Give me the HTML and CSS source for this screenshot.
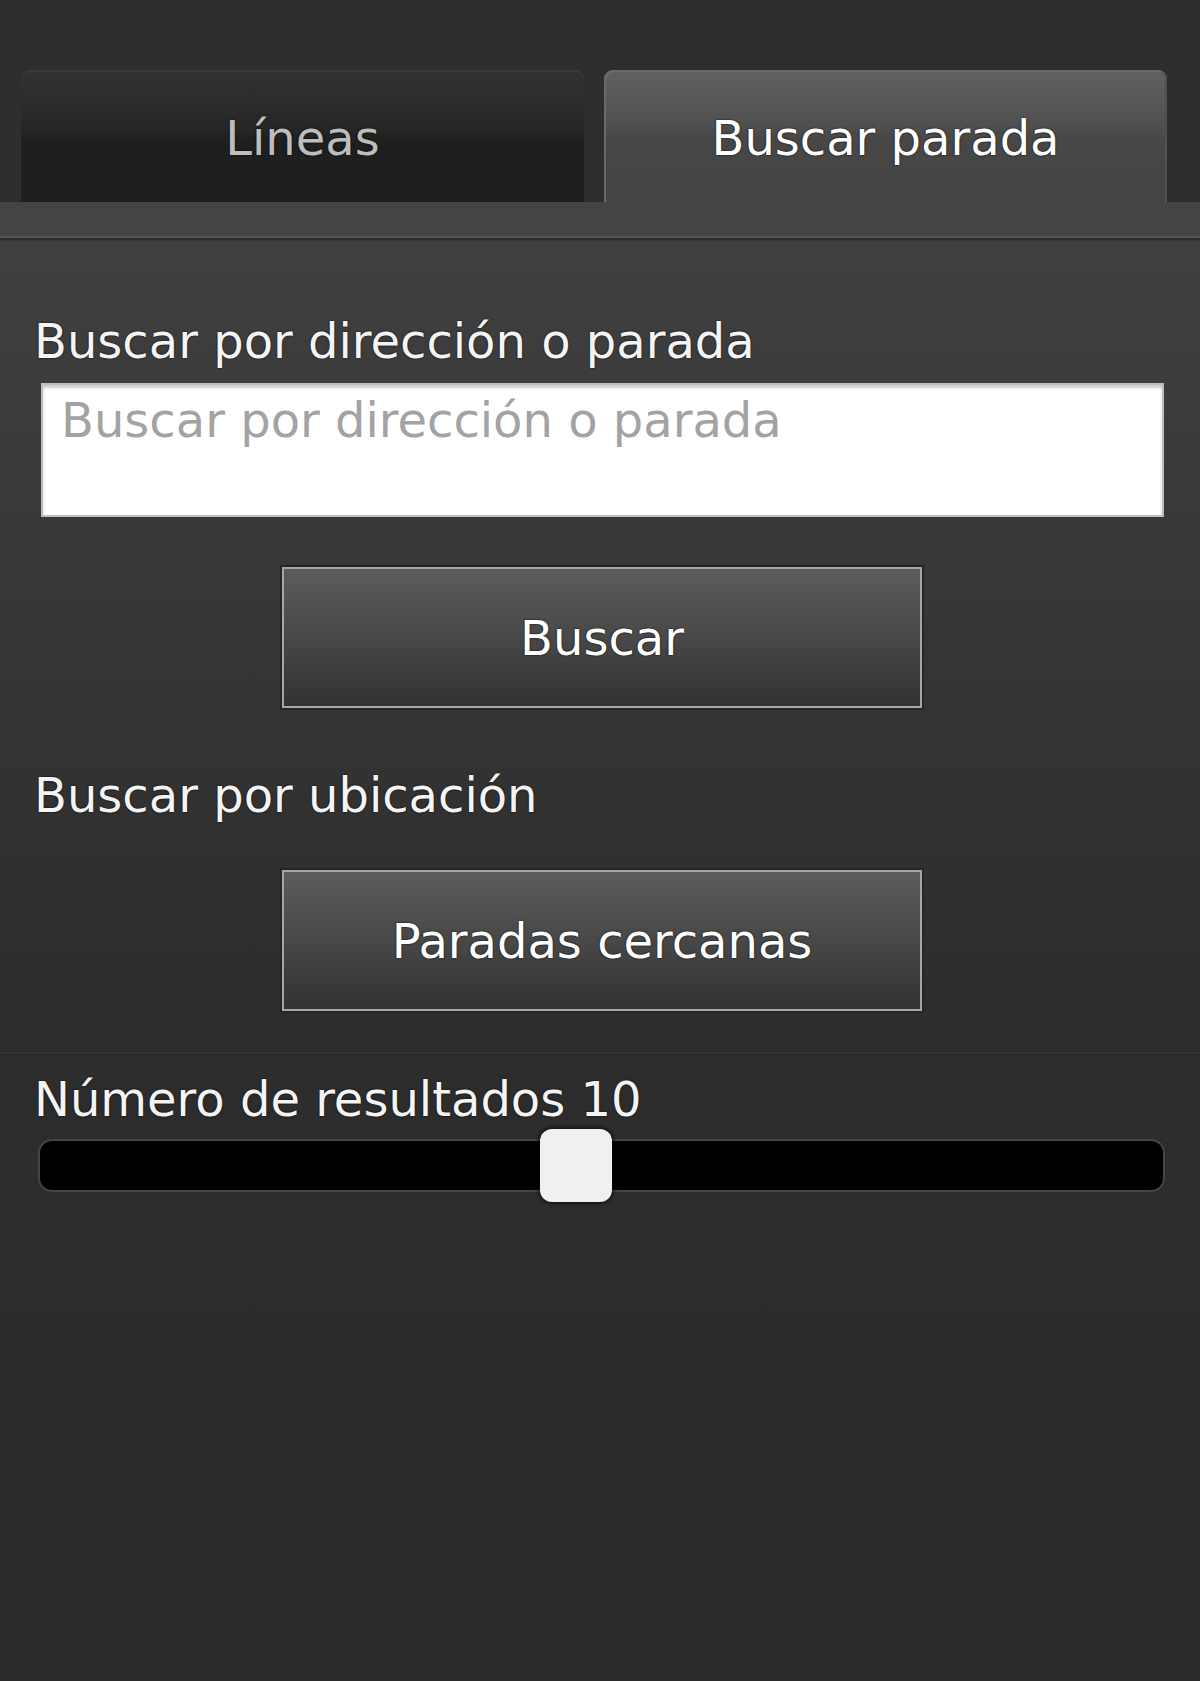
FILE: index.html
```html
<!DOCTYPE html>
<html lang="es">
<head>
    <meta charset="UTF-8">
    <title>Buscar parada</title>
    <link rel="stylesheet" href="styles.css">
</head>
<body>
<div class="screen">
    <!--pestañas-->
    <div class="tabs">
        <div class="tab">Líneas</div>
        <div class="tab active">Buscar parada</div>
    </div>
    <div class="tab-strip"></div>
    <!--contenido de la pestaña-->
    <div class="panel">
        <div class="label">Buscar por dirección o parada</div>
        <input class="search" type="text" placeholder="Buscar por dirección o parada">
        <div class="btn-row"><button class="btn">Buscar</button></div>

        <div class="label label-loc">Buscar por ubicación</div>
        <div class="btn-row btn-row-loc"><button class="btn">Paradas cercanas</button></div>

        <div class="sep"></div>

        <div class="label label-num">Número de resultados 10</div>
        <div class="slider">
            <div class="track"></div>
            <div class="thumb"></div>
        </div>
    </div>
</div>
</body>
</html>
```

FILE: styles.css
```css
* {
    margin: 0;
    padding: 0;
    box-sizing: border-box;
}

body {
    background-color: #2d2d2d;
    font-family: "DejaVu Sans", "Open Sans", sans-serif;
    color: #f4f4f4;
}

.screen {
    width: 1200px;
    min-height: 1681px;
    background: linear-gradient(#2e2e2e 0, #2e2e2e 240px, #404040 241px, #343434 700px, #2d2d2d 1000px, #2b2b2b 1681px);
}

/*pestañas*/
.tabs {
    display: flex;
    gap: 20px;
    padding: 70px 33px 0 21px;
}

.tab {
    width: 563px;
    height: 132px;
    padding-top: 8px;
    border-radius: 9px 9px 0 0;
    background: linear-gradient(#333 0, #262626 60px, #1f1f1f 70px, #1e1e1e 100%);
    box-shadow: inset 0 2px 0 #3a3a3a;
    color: #bdbdbd;
    font-size: 48px;
    line-height: 120px;
    text-align: center;
    text-shadow: 0 0 2px #000;
}

.tab.active {
    background: linear-gradient(#616161 0, #525252 50px, #474747 70px, #444 100%);
    box-shadow: inset 2px 2px 0 #6a6a6a, inset -2px 0 0 #505050;
    color: #fff;
}

/*pestañas: franja inferior*/
.tab-strip {
    height: 36px;
    background-color: #444;
    border-bottom: 2px solid #555;
}

/*contenido*/
.panel {
    padding: 75px 36px 0 34px;
}

.label {
    font-size: 48px;
    line-height: 56px;
    text-shadow: 0 0 2px #000;
}

.search {
    display: block;
    width: 1123px;
    height: 134px;
    margin: 14px 0 0 7px;
    padding: 7px 18px 67px;
    border: 2px solid #bdbdbd;
    background-color: #fff;
    box-shadow: inset 0 3px 3px #ccc;
    font-family: inherit;
    font-size: 48px;
    line-height: 56px;
    outline: none;
}

.search::placeholder {
    color: #a3a3a3;
}

.btn-row {
    display: flex;
    justify-content: center;
    margin: 50px 0 0 6px;
}

.btn {
    width: 640px;
    height: 141px;
    border: 2px solid #a6a6a6;
    background: linear-gradient(#5c5c5c, #484848 50%, #323232);
    box-shadow: 0 0 0 2px #262626;
    color: #fff;
    font-family: inherit;
    font-size: 48px;
    text-shadow: 0 0 2px #000;
}

.label-loc {
    margin-top: 59px;
}

.btn-row-loc {
    margin-top: 47px;
}

.sep {
    margin: 40px -36px 0 -34px;
    height: 2px;
    border-top: 1px solid #262626;
    border-bottom: 1px solid #3c3c3c;
}

.label-num {
    margin-top: 18px;
}

/*barra deslizante*/
.slider {
    position: relative;
    height: 73px;
    margin: 2px 0 0 6px;
    display: flex;
    align-items: center;
}

.track {
    width: 1123px;
    height: 49px;
    border-radius: 12px;
    background-color: #000;
    box-shadow: 0 0 0 2px #454545;
}

.thumb {
    position: absolute;
    left: 500px;
    top: 0;
    width: 72px;
    height: 73px;
    border-radius: 12px;
    background-color: #f0f0f0;
    box-shadow: 0 0 4px 1px rgba(0, 0, 0, 0.8);
}
```
